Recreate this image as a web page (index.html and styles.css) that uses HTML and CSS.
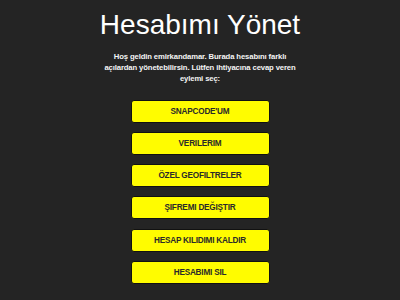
FILE: index.html
```html
<!DOCTYPE html>
<html lang="tr">
<head>
<meta charset="utf-8">
<title>Hesabımı Yönet</title>
<link rel="stylesheet" href="styles.css">
</head>
<body>
<main class="page">
  <h1 class="title">Hesabımı Yönet</h1>
  <p class="intro">Hoş geldin emirkandamar. Burada hesabını farklı açılardan yönetebilirsin. Lütfen ihtiyacına cevap veren eylemi seç:</p>
  <nav class="actions">
    <a class="action" href="#">SNAPCODE'UM</a>
    <a class="action" href="#">VERILERIM</a>
    <a class="action" href="#">ÖZEL GEOFILTRELER</a>
    <a class="action" href="#">ŞIFREMI DEĞIŞTIR</a>
    <a class="action" href="#">HESAP KILIDIMI KALDIR</a>
    <a class="action" href="#">HESABIMI SIL</a>
  </nav>
</main>
</body>
</html>
```
FILE: styles.css
```css
html, body {
  margin: 0;
  padding: 0;
  background: #242424;
}
body {
  font-family: "Liberation Sans", Arial, sans-serif;
  color: #fff;
}
.page {
  display: flex;
  flex-direction: column;
  align-items: center;
  padding-top: 9px;
}
.title {
  margin: 0;
  font-size: 28px;
  font-weight: 400;
  line-height: 32px;
  color: #fff;
}
.intro {
  margin: 10px 0 0;
  width: 198px;
  font-size: 7.7px;
  line-height: 11.2px;
  font-weight: 700;
  letter-spacing: -0.12px;
  text-align: center;
  color: #f4f4f4;
}
.actions {
  display: flex;
  flex-direction: column;
  gap: 9.25px;
  margin-top: 15px;
}
.action {
  box-sizing: border-box;
  display: flex;
  align-items: center;
  justify-content: center;
  width: 139px;
  height: 23px;
  background: #fffc00;
  border: 1px solid #111;
  border-radius: 3px;
  color: #2a2a2a;
  font-size: 8.2px;
  font-weight: 700;
  letter-spacing: -0.2px;
  text-decoration: none;
}
```
